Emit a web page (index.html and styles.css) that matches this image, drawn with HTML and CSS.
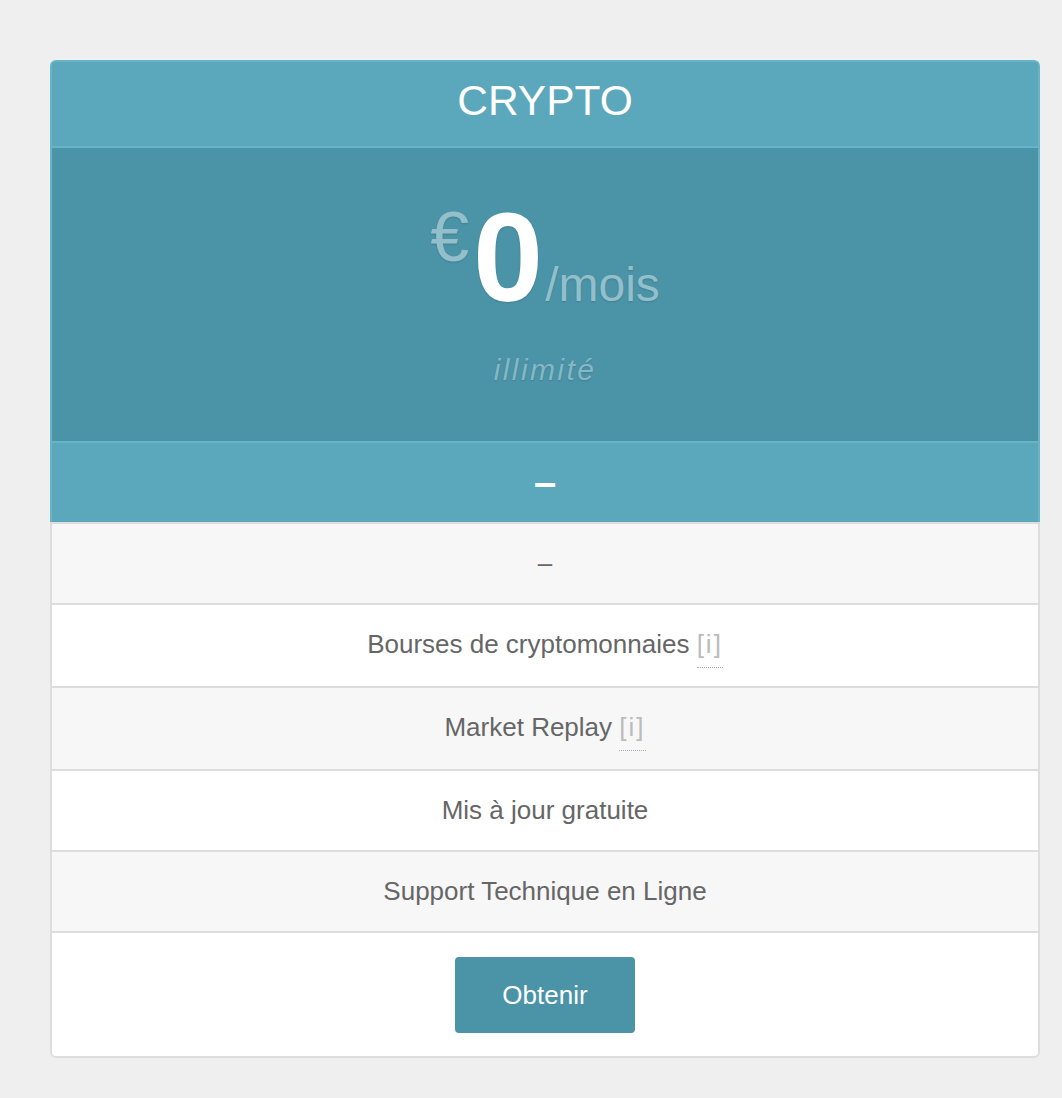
FILE: index.html
```html
<!DOCTYPE html>
<html>
  <head>
    <title>Crypto</title>
    <meta charset="UTF-8">
    <link rel="stylesheet" href="styles.css">
  </head>
  <body>
    <div class="plan">
      <div class="plan-title">CRYPTO</div>
      <div class="plan-price">
        <div class="price"><span class="currency">€</span><span class="amount">0</span><span class="period">/mois</span></div>
        <div class="price-note">illimité</div>
      </div>
      <div class="plan-feature-head">–</div>
      <ul class="features">
        <li class="odd">–</li>
        <li class="with-info">Bourses de cryptomonnaies <span class="info">[i]</span></li>
        <li class="odd with-info">Market Replay <span class="info">[i]</span></li>
        <li>Mis à jour gratuite</li>
        <li class="odd">Support Technique en Ligne</li>
      </ul>
      <div class="plan-footer">
        <button type="button" class="button">Obtenir</button>
      </div>
    </div>
  </body>
</html>
```

FILE: styles.css
```css
body {
  background-color: #efefef;
  margin: 0;
  padding: 60px 22px 40px 50px;
  font-family: "Liberation Sans", Arial, Helvetica, sans-serif;
}

.plan {
  width: 990px;
  text-align: center;
}

.plan-title {
  background-color: #5ba7bb;
  border: 2px solid #68b4c7;
  border-bottom: 0;
  border-radius: 6px 6px 0 0;
  color: #ffffff;
  font-size: 42.5px;
  height: 84px;
  line-height: 78px;
}

.plan-price {
  background-color: #4b94a8;
  border: 2px solid #68b4c7;
  border-bottom: 0;
  height: 293px;
}

.price {
  padding-top: 47px;
  line-height: 128px;
  height: 128px;
  white-space: nowrap;
}

.currency {
  color: #93bfcb;
  font-size: 70px;
  line-height: 1;
  vertical-align: 40px;
  text-shadow: 0 1px 2px rgba(0, 0, 0, 0.15);
}

.amount {
  color: #ffffff;
  font-size: 126px;
  font-weight: bold;
  line-height: 1;
  margin-left: 4px;
  text-shadow: 0 1px 2px rgba(0, 0, 0, 0.15);
}

.period {
  color: #93bfcb;
  font-size: 48px;
  line-height: 1;
  margin-left: 2px;
  text-shadow: 0 1px 2px rgba(0, 0, 0, 0.15);
}

.price-note {
  margin-top: 29px;
  color: #85b7c5;
  font-size: 30px;
  font-style: italic;
  letter-spacing: 2.4px;
  line-height: 35px;
  text-shadow: 0 1px 2px rgba(0, 0, 0, 0.15);
}

.plan-feature-head {
  background-color: #5ba7bb;
  border: 2px solid #68b4c7;
  border-bottom: 0;
  color: #ffffff;
  font-size: 40px;
  font-weight: bold;
  height: 79px;
  line-height: 79px;
}

.features {
  list-style: none;
  margin: 0;
  padding: 0;
}

.features li {
  background-color: #ffffff;
  border: 2px solid #dddddd;
  border-bottom: 0;
  color: #666666;
  font-size: 26px;
  line-height: 31px;
  padding: 24px 0;
}

.features li.with-info {
  padding-bottom: 26px;
}

.features li.odd {
  background-color: #f7f7f7;
}

.info {
  color: #bbbbbb;
  letter-spacing: 2px;
  padding-bottom: 8px;
  border-bottom: 1px dotted #aaaaaa;
}

.plan-footer {
  background-color: #ffffff;
  border: 2px solid #dddddd;
  border-radius: 0 0 6px 6px;
  padding: 24px 0 23px;
}

.button {
  background-color: #4b94a8;
  border: 0;
  border-radius: 4px;
  color: #ffffff;
  cursor: pointer;
  font-family: inherit;
  font-size: 26px;
  width: 180px;
  height: 76px;
  padding: 0;
}

.button:hover {
  background-color: #3f8295;
}
```
